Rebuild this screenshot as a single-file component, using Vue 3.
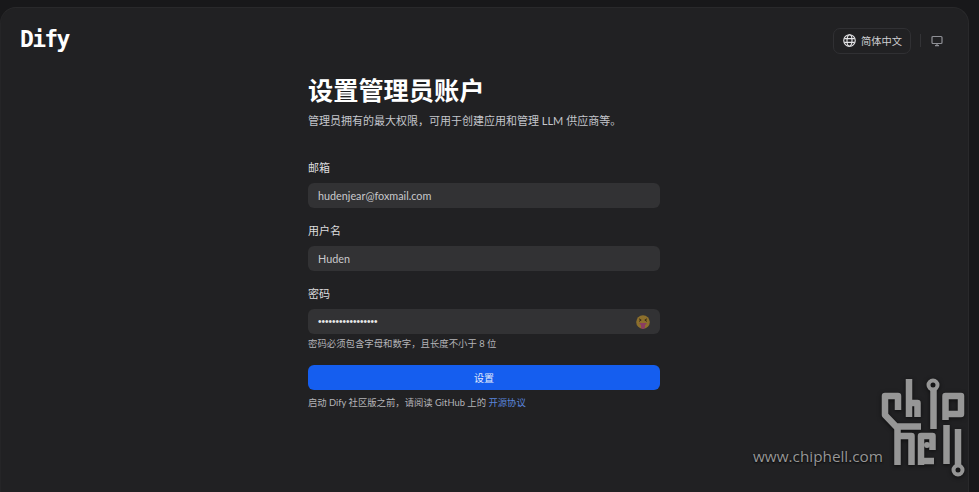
<script setup>
const fields = [
  { label: '邮箱', value: 'hudenjear@foxmail.com' },
  { label: '用户名', value: 'Huden' },
]
</script>

<template>
  <div class="page">
    <div class="panel">
      <header class="head">
        <div class="logo">Dify</div>
        <div class="tools">
          <div class="lang">
            <svg class="globe" width="13" height="13" viewBox="0 0 14 14" fill="none" stroke="#e4e4e6" stroke-width="1.200">
              <circle cx="7" cy="7" r="6.200" />
              <ellipse cx="7" cy="7" rx="2.700" ry="6.200" />
              <path d="M1.400 5h11.200M1.400 9h11.200" />
            </svg>
            <span>简体中文</span>
          </div>
          <i class="sep"></i>
          <svg class="monitor" width="12" height="12" viewBox="0 0 12 12" fill="none" stroke="#8f9096" stroke-width="1.200">
            <rect x="1" y="1.500" width="10" height="7" rx="1" />
            <path d="M4 10.700h4M6 8.500v2" />
          </svg>
        </div>
      </header>

      <main class="form">
        <h1 class="title">设置管理员账户</h1>
        <p class="sub">管理员拥有的最大权限，可用于创建应用和管理 LLM 供应商等。</p>

        <div class="fields">
          <div v-for="f in fields" :key="f.label" class="field">
            <label class="label">{{ f.label }}</label>
            <div class="input"><span>{{ f.value }}</span></div>
          </div>
          <div class="field">
            <label class="label">密码</label>
            <div class="input">
              <span class="dots">•••••••••••••••••</span>
              <svg class="emoji" width="14" height="14" viewBox="0 0 14 14">
                <circle cx="7" cy="7" r="6.800" fill="#8c6f2c" />
                <path d="M3 3.800l2.200 1.300L3 6.400M11 3.800L8.800 5.100 11 6.400" fill="none" stroke="#3a2c18" stroke-width="1" />
                <path d="M3.200 8h7.600c-.4 1-1 1.600-1.800 2V12a2 2 0 0 1-4 0v-2c-.8-.4-1.400-1-1.800-2z" fill="#8a3c62" />
              </svg>
            </div>
            <p class="hint">密码必须包含字母和数字，且长度不小于 8 位</p>
          </div>
        </div>

        <button class="submit" type="button">设置</button>
        <p class="agree">启动 Dify 社区版之前，请阅读 GitHub 上的 <a class="link">开源协议</a></p>
      </main>
    </div>

    <div class="mark">
      <span class="mark-url">www.chiphell.com</span>
      <svg class="mark-logo" width="95" height="105" viewBox="875 375 95 105" fill="none" stroke="#969696" stroke-width="6.500" stroke-linejoin="round">
        <path d="M898 410V396H885V415L896 426.500H921" />
        <path d="M909 379V417M909 403H917.500V417" />
        <circle cx="933" cy="385" r="4.500" stroke-width="4" />
        <path d="M933.500 389V429" />
        <path d="M945.500 420V396H961V414H946" />
        <path d="M897.500 427V465M897.500 436H911.500V465" />
        <path d="M921 465V436H932.500V450M921 461H934" />
        <circle cx="927" cy="445" r="3" fill="#969696" stroke="none" />
        <path d="M946.500 425V464" />
        <path d="M958 429V465" />
        <circle cx="958" cy="470" r="4.500" stroke-width="4" />
      </svg>
    </div>
  </div>
</template>

<style>
html, body { margin: 0; background: #18181a; }
</style>

<style scoped>
.page {
  position: relative;
  width: 979px;
  height: 492px;
  overflow: hidden;
  box-sizing: border-box;
  padding: 7px 10px 0 0;
  background: #18181a;
  font-family: Lato, "Noto Sans CJK SC", sans-serif;
  color: #d8d8da;
}
.panel {
  height: 100%;
  box-sizing: border-box;
  background: #212123;
  border: 1px solid #29292b;
  border-bottom: 0;
  border-left-color: #252527;
  border-radius: 16px 16px 0 0;
  padding: 19px 25px 0 19px;
}
.head {
  display: flex;
  align-items: center;
  justify-content: space-between;
  height: 27px;
}
.logo {
  font-family: "DejaVu Sans Mono", monospace;
  font-weight: 700;
  font-size: 23px;
  line-height: 27px;
  color: #fff;
  letter-spacing: -1.700px;
  margin-top: -3px;
}
.tools {
  display: flex;
  align-items: center;
}
.lang {
  display: flex;
  align-items: center;
  gap: 5px;
  height: 26px;
  box-sizing: border-box;
  padding: 0 8px 0 9px;
  border: 1px solid #303033;
  border-radius: 7px;
  font-size: 10.250px;
  color: #cfcfd2;
}
.sep {
  width: 1px;
  height: 13px;
  margin: 0 10px 0 9px;
  background: #333336;
}
.form {
  width: 352px;
  margin: 20px 0 0 288px;
}
.title {
  margin: 0;
  font-size: 25.200px;
  line-height: 32px;
  font-weight: 700;
  color: #fff;
}
.sub {
  margin: 7px 0 0;
  font-size: 11px;
  line-height: 16px;
  color: #c4c6cc;
}
.fields {
  display: flex;
  flex-direction: column;
  gap: 15px;
  margin-top: 31px;
}
.label {
  display: block;
  font-size: 11px;
  line-height: 16px;
  color: #dcdcde;
  margin-bottom: 7px;
}
.input {
  display: flex;
  align-items: center;
  justify-content: space-between;
  height: 25px;
  box-sizing: border-box;
  padding: 0 10px 0 10px;
  border-radius: 6px;
  background: #323234;
  font-size: 10.800px;
  color: #c9c9cc;
}
.input span {
  margin-top: -1px;
}
.dots {
  font-size: 10px;
  color: #e8e8ea;
  font-family: "Liberation Sans", sans-serif;
}
.hint {
  margin: 2px 0 0;
  font-size: 9.400px;
  line-height: 15px;
  color: #b4b4b8;
}
.submit {
  display: block;
  width: 100%;
  height: 25px;
  margin-top: 14px;
  padding: 0;
  border: 0;
  border-radius: 6px;
  background: #155eef;
  font: inherit;
  font-size: 10px;
  color: #e4ebfb;
}
.agree {
  margin: 5px 0 0;
  font-size: 9.350px;
  line-height: 16px;
  color: #b4b4b8;
}
.link { color: #5a85dc; }
.mark {
  position: absolute;
  left: 753px;
  top: 375px;
  width: 222px;
  height: 110px;
}
.mark-url {
  position: absolute;
  left: 0;
  top: 71px;
  font-family: "Open Sans", sans-serif;
  font-size: 15.300px;
  line-height: 20px;
  color: #979797;
  white-space: nowrap;
  text-shadow: 0 1px 2px #000;
}
.mark-logo {
  position: absolute;
  left: 122px;
  top: 0;
  filter: drop-shadow(0 1px 2px #0009);
}
</style>
